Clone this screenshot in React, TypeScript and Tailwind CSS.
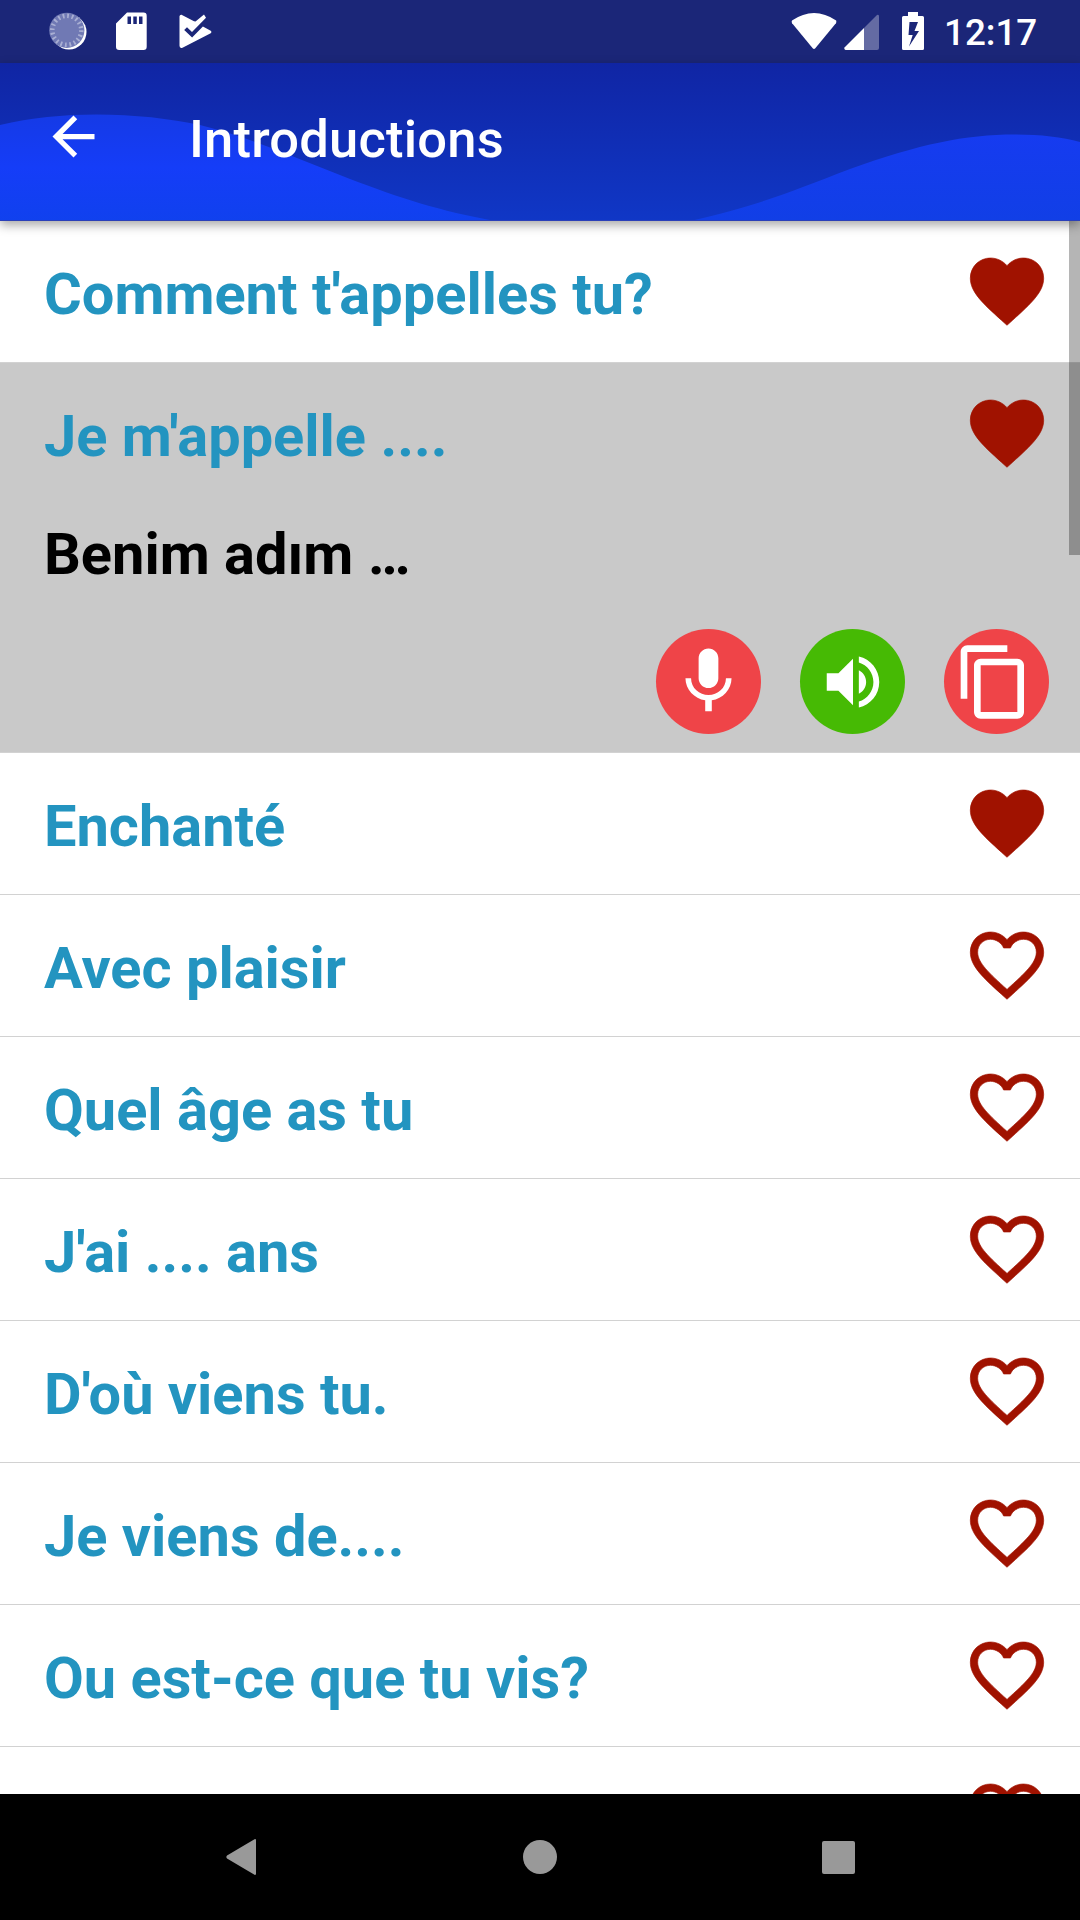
import React from "react";

interface Phrase {
  text: string;
  translation?: string;
  favorite: boolean;
}

const phrases: Phrase[] = [
  { text: "Comment t'appelles tu?", favorite: true },
  { text: "Je m'appelle ....", translation: "Benim adım …", favorite: true },
  { text: "Enchanté", favorite: true },
  { text: "Avec plaisir", favorite: false },
  { text: "Quel âge as tu", favorite: false },
  { text: "J'ai .... ans", favorite: false },
  { text: "D'où viens tu.", favorite: false },
  { text: "Je viens de....", favorite: false },
  { text: "Ou est-ce que tu vis?", favorite: false },
  { text: "", favorite: false },
];

const HEART =
  "M12 21.35l-1.45-1.32C5.4 15.36 2 12.28 2 8.5 2 5.42 4.42 3 7.5 3c1.74 0 3.41.81 4.5 2.09C13.09 3.81 14.76 3 16.5 3 19.58 3 22 5.42 22 8.5c0 3.78-3.4 6.86-8.55 11.54L12 21.35z";
const HEART_BORDER =
  "M16.5 3c-1.74 0-3.41.81-4.5 2.09C10.91 3.81 9.24 3 7.5 3 4.42 3 2 5.42 2 8.5c0 3.78 3.4 6.86 8.55 11.54L12 21.35l1.45-1.32C18.6 15.36 22 12.28 22 8.5 22 5.42 19.58 3 16.5 3zm-4.4 15.55l-.1.1-.1-.1C7.14 14.24 4 11.39 4 8.5 4 6.5 5.5 5 7.5 5c1.54 0 3.04.99 3.57 2.36h1.87C13.46 5.99 14.96 5 16.5 5c2 0 3.5 1.5 3.5 3.5 0 2.89-3.14 5.74-7.9 10.05z";

const Heart = ({ filled }: { filled: boolean }) => (
  <svg
    viewBox="0 0 24 24"
    className="mt-[26px] size-[88px] shrink-0 fill-[#a01200] stroke-[#a01200]"
    strokeWidth="0.18"
  >
    <path d={filled ? HEART : HEART_BORDER} />
  </svg>
);

const StatusBar = () => (
  <div className="flex h-[63px] shrink-0 items-center justify-between bg-[#1b2678] pr-[42px] pl-[48px] text-white">
    <svg width="170" height="63" viewBox="48 0 170 63" fill="currentColor">
      {/* sync spinner */}
      <circle cx="69" cy="32" r="17.5" />
      <circle cx="66.8" cy="30.300" r="17.600" fill="#7079b4" />
      <circle
        cx="66.8"
        cy="30.3"
        r="14.5"
        fill="none"
        stroke="#a9afd3"
        strokeWidth="4.5"
        strokeDasharray="1.8 2.75"
      />
      {/* sd card */}
      <path
        fillRule="evenodd"
        d="M127 12.5h16.5a3.2 3.2 0 0 1 3.2 3.2v31.1a3.2 3.2 0 0 1-3.2 3.2h-24.300a3.200 3.200 0 0 1-3.200-3.200V23.500zM127.500 16.500v7.500h3.500v-7.500zM133.300 16.500v7.500h3.500v-7.500zM139 16.500v7.500h3.500v-7.500z"
      />
      {/* play protect */}
      <path d="M181.500 14.700 194 21.300l1.500.2 8.500-7 2 3.200-14 14.300-5-4.800-2.800 2.900 7.900 7.500 10.800-11.200 7.800 4.300q1.800 1.200 0 2.600L182.500 47.700q-3 1-3-1.900V16.200q.2-1.700 2-1.500z" />
    </svg>
    <div className="flex items-center">
      <svg width="140" height="63" viewBox="790 0 140 63" fill="currentColor">
        <path d="M792 20.500Q814 5.500 836.200 20.500q.5 1.500-.3 2.700L815.300 48.300q-1.300 1.200-2.600 0L792.100 23.200q-.9-1.400-.1-2.700z" />
        <path d="M864 28v22h-18.500q-2-.8-1-2.500z" />
        <path d="M864 28l13-13q1.800-.6 2 1.200V48q0 2-2 2h-13z" opacity=".32" />
        <path
          fillRule="evenodd"
          d="M908 12h10v4h4.500q1.500 0 1.500 1.500v31q0 1.500-1.500 1.500h-19q-1.500 0-1.500-1.500v-31q0-1.500 1.500-1.500h4.500zM909.500 22l-1 13h4.200l-3.700 11.500L919 31h-4.500l3.500-9z"
        />
      </svg>
      <span className="mt-[4px] ml-[14px] w-[94px] text-[36.75px] leading-none font-medium whitespace-nowrap">
        12:17
      </span>
    </div>
  </div>
);

const Header = () => (
  <header className="relative z-10 h-[158px] shrink-0 shadow-[0_4px_10px_rgba(0,0,0,0.35)]">
    {/* wavy backdrop */}
    <svg className="absolute inset-0" width="1080" height="158" viewBox="0 63 1080 158">
      <defs>
        <linearGradient id="sky" x1="0" y1="0" x2="0" y2="1">
          <stop offset="0" stopColor="#1025a4" />
          <stop offset="1" stopColor="#1037c6" />
        </linearGradient>
        <linearGradient id="waveLeft" x1="0" y1="0" x2="0" y2="1">
          <stop offset="0" stopColor="#153ae6" />
          <stop offset=".5" stopColor="#153df8" />
          <stop offset="1" stopColor="#1041ee" />
        </linearGradient>
        <linearGradient id="waveRight" x1="0" y1="0" x2="0" y2="1">
          <stop offset="0" stopColor="#163bf0" />
          <stop offset="1" stopColor="#113fe6" />
        </linearGradient>
      </defs>
      <rect y="63" width="1080" height="158" fill="url(#sky)" />
      <path
        d="M0 125C65 109 145 113 200 125C250 137 300 160 350 179C400 198 440 211 495 221H0z"
        fill="url(#waveLeft)"
      />
      <path
        d="M690 221C760 205 790 192 850 169C920 144 965 134.500 1015 134.500C1040 134.500 1062 137 1080 142V221z"
        fill="url(#waveRight)"
      />
      <rect y="220" width="1080" height="1" fill="#2a3fb8" />
    </svg>
    <div className="relative flex h-[147px] items-center pl-[42px] text-white">
      <svg viewBox="0 0 24 24" className="size-[63px] fill-current">
        <path d="M20 11H7.830l5.590-5.590L12 4l-8 8 8 8 1.410-1.410L7.830 13H20v-2z" />
      </svg>
      <h1 className="mt-[5px] ml-[84px] text-[52.5px] leading-none font-medium tracking-[0.2px]">
        Introductions
      </h1>
    </div>
  </header>
);

const Actions = () => (
  <div className="mt-[41px] flex justify-end gap-[39px] pr-[31px]">
    <button className="flex size-[105px] items-center justify-center rounded-full bg-[#ef4448]">
      <svg viewBox="0 0 24 24" className="size-[79px] fill-white">
        <path d="M12 14c1.660 0 2.990-1.340 2.990-3L15 5c0-1.660-1.340-3-3-3S9 3.340 9 5v6c0 1.660 1.340 3 3 3zm5.300-3c0 3-2.540 5.100-5.300 5.100S6.700 14 6.700 11H5c0 3.410 2.720 6.230 6 6.720V21h2v-3.280c3.280-.48 6-3.300 6-6.720h-1.700z" />
      </svg>
    </button>
    <button className="flex size-[105px] items-center justify-center rounded-full bg-[#46ba04]">
      <svg viewBox="0 0 24 24" className="size-[70px] fill-white">
        <path d="M3 9v6h4l5 5V4L7 9H3zm13.500 3c0-1.770-1.020-3.290-2.500-4.030v8.050c1.480-.73 2.500-2.250 2.500-4.020zM14 3.230v2.060c2.890.86 5 3.540 5 6.710s-2.110 5.850-5 6.710v2.060c4.010-.91 7-4.490 7-8.770s-2.990-7.860-7-8.770z" />
      </svg>
    </button>
    <button className="flex size-[105px] items-center rounded-full bg-[#ef4448] pl-[10px]">
      <svg viewBox="0 0 24 24" className="size-[80px] fill-white">
        <path d="M16 1H4c-1.100 0-2 .9-2 2v14h2V3h12V1zm3 4H8c-1.100 0-2 .9-2 2v14c0 1.100.9 2 2 2h11c1.100 0 2-.9 2-2V7c0-1.100-.9-2-2-2zm0 16H8V7h11v14z" />
      </svg>
    </button>
  </div>
);

const PhraseRow = ({ phrase }: { phrase: Phrase }) => (
  <li
    className={
      phrase.translation
        ? "h-[390px] shrink-0 border-b border-[#d2d2d2] bg-[#c9c9c9]"
        : "h-[142px] shrink-0 border-b border-[#d2d2d2] bg-white"
    }
  >
    <div className="flex h-[141px] justify-between pr-[29px] pl-[44px]">
      <span className="mt-[39px] text-[57.75px] leading-[68px] font-bold whitespace-nowrap text-[#2394c0]">
        {phrase.text}
      </span>
      <Heart filled={phrase.favorite} />
    </div>
    {phrase.translation && (
      <>
        <p className="mt-[16px] pl-[44px] text-[57.75px] leading-[68px] font-bold text-black">
          {phrase.translation}
        </p>
        <Actions />
      </>
    )}
  </li>
);

const NavBar = () => (
  <nav className="flex h-[126px] shrink-0 items-center justify-between bg-black pr-[225px] pl-[225px]">
    <svg width="32" height="38" viewBox="0 0 32 38" fill="#999">
      <path d="M29.500 1.200q1.500-.7 1.500 1.300v33q0 2-1.500 1.300L2 20.500q-1.600-1.500 0-3z" />
    </svg>
    <div className="size-[34px] rounded-full bg-[#999]" />
    <div className="size-[33px] rounded-[2px] bg-[#999]" />
  </nav>
);

export default function App() {
  return (
    <div className="flex h-[1920px] w-[1080px] flex-col overflow-hidden bg-white font-[Roboto,sans-serif]">
      <StatusBar />
      <Header />
      <main className="relative min-h-0 flex-1 overflow-hidden">
        <ul className="flex flex-col">
          {phrases.map((phrase, index) => (
            <PhraseRow key={index} phrase={phrase} />
          ))}
        </ul>
        {/* scroll thumb */}
        <div className="absolute top-0 right-0 h-[334px] w-[11px] bg-black/29" />
      </main>
      <NavBar />
    </div>
  );
}
